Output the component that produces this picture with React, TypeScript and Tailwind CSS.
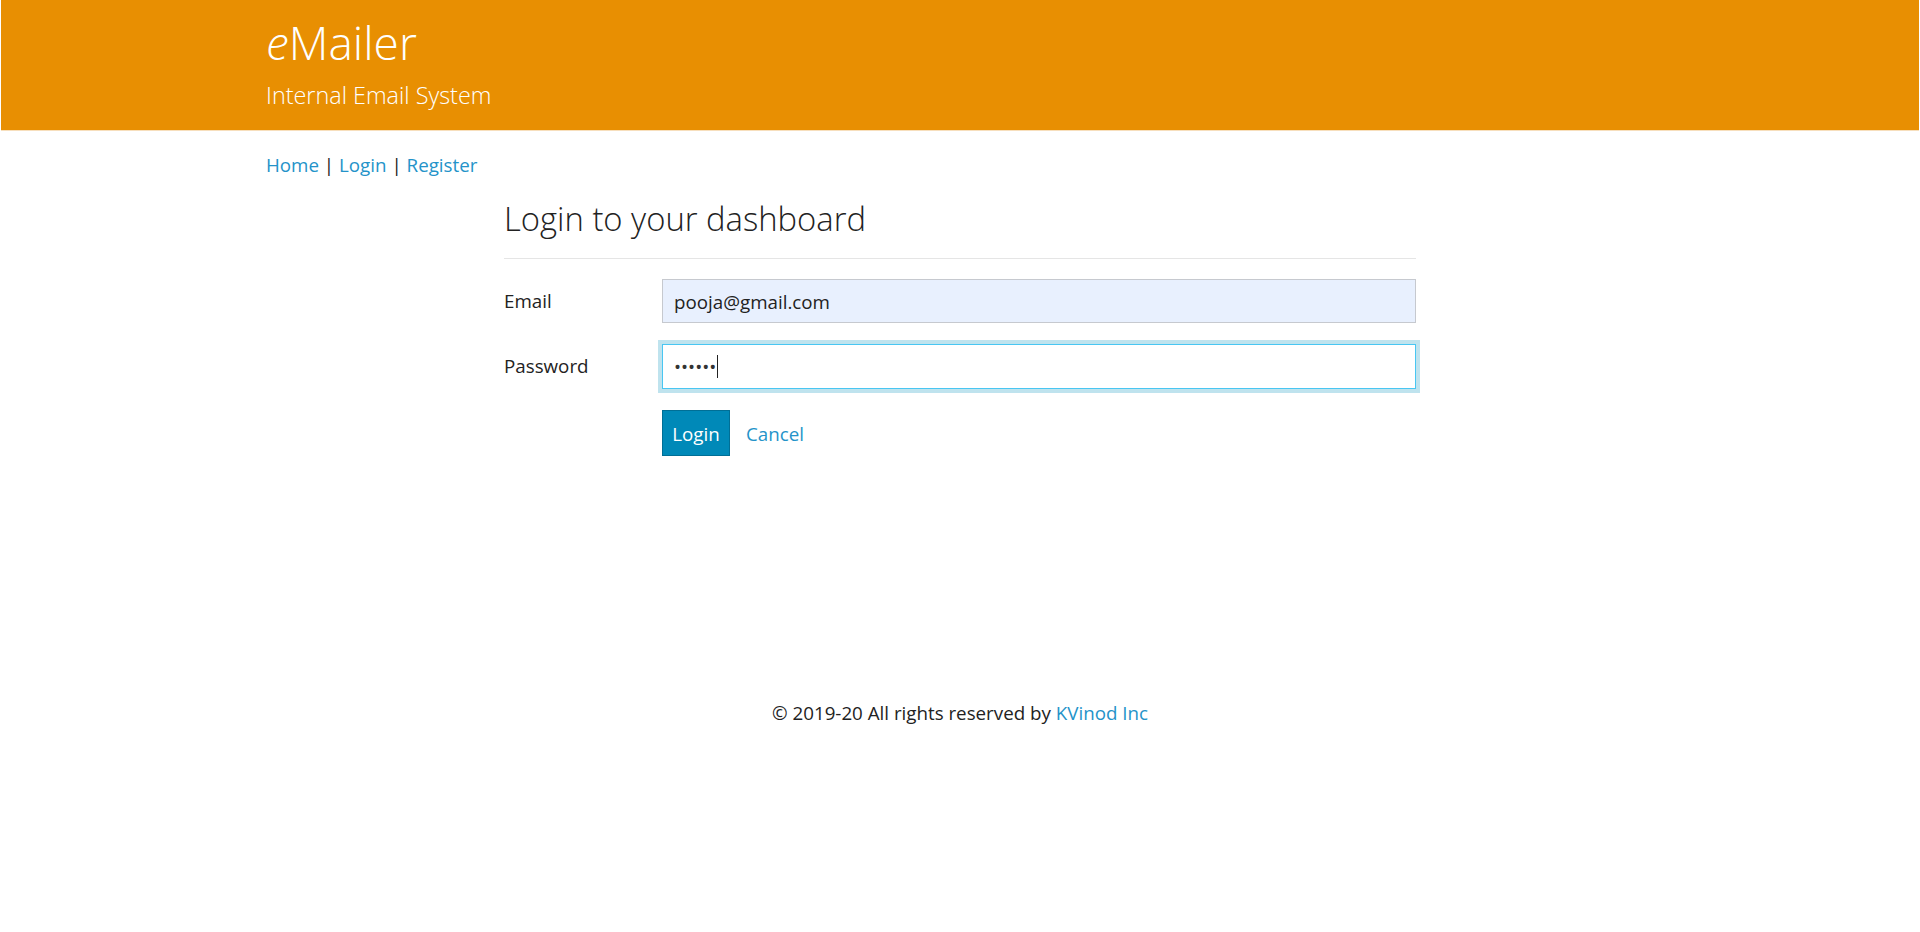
export default function App() {
  return (
    <div className="min-h-screen bg-white text-[18.75px] leading-[25px] text-[#222] font-['Open_Sans',sans-serif]">
      {/* banner */}
      <header className="mx-[1px] h-[131px] bg-[#e88f02] border-b border-[#f7dfbd]">
        <div className="w-[1388px] mx-auto pt-[17px] text-white">
          <h1 className="text-[46px] leading-[50px] font-light">
            <i>e</i>Mailer
          </h1>
          <p className="mt-[13px] text-[23.4px] leading-[30px] font-light">Internal Email System</p>
        </div>
      </header>

      <main className="w-[1388px] mx-auto">
        <nav className="mt-[21px] whitespace-pre">
          <a href="#" className="text-[#2493c9]">Home</a>
          {" | "}
          <a href="#" className="text-[#2493c9]">Login</a>
          {" | "}
          <a href="#" className="text-[#2493c9]">Register</a>
        </nav>

        <section className="ml-[238px] w-[912px]">
          <h2 className="mt-[24px] text-[32.8px] leading-[36px] font-light text-[#222]">Login to your dashboard</h2>
          <div className="mt-[21px] h-px bg-[#e5e5e5]" />

          <div className="mt-[20px] flex items-center">
            <label className="w-[158px] -mt-[2px]">Email</label>
            <div className="flex-1 h-[44px] flex items-center px-[11px] bg-[#e8f0fe] border border-[#c6c9cf]">
              pooja@gmail.com
            </div>
          </div>

          <div className="mt-[21px] flex items-center">
            <label className="w-[158px] -mt-[2px]">Password</label>
            <div className="flex-1 h-[45px] flex items-center px-[11px] bg-white border border-[#49c6f2] shadow-[0_0_0_4px_#bfe3ee]">
              <span className="text-[#333]">••••••</span>
              <span className="ml-[1px] w-px h-[23px] bg-[#222]" />
            </div>
          </div>

          <div className="mt-[21px] flex items-center pl-[158px] gap-[16px]">
            <button className="h-[46px] w-[68px] bg-[#0089b8] border border-[#006f96] text-white">Login</button>
            <a href="#" className="text-[#2493c9]">Cancel</a>
          </div>
        </section>
      </main>

      <footer className="mt-[244px] text-center">
        © 2019-20 All rights reserved by <a href="#" className="text-[#2493c9]">KVinod Inc</a>
      </footer>
    </div>
  );
}
